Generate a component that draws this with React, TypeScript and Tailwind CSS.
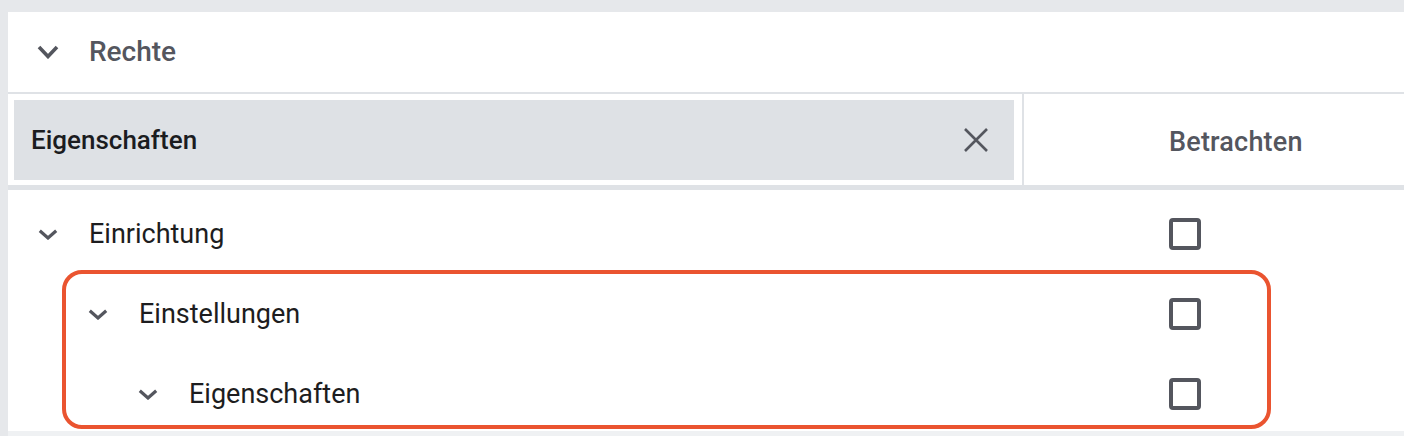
import React from "react";

const rows = [
  { label: "Einrichtung", level: 0 },
  { label: "Einstellungen", level: 1 },
  { label: "Eigenschaften", level: 2 },
];

function Chevron({ big }: { big?: boolean }) {
  if (big) {
    return (
      <svg width="22" height="14" viewBox="0 0 22 14" className="shrink-0">
        <polyline points="2,2 11,11.5 20,2" fill="none" stroke="#54565e" strokeWidth="3.6" />
      </svg>
    );
  }
  return (
    <svg width="20" height="11" viewBox="0 0 20 11" className="shrink-0">
      <polyline points="1.8,1.8 10,9 18.2,1.8" fill="none" stroke="#54565e" strokeWidth="3.2" />
    </svg>
  );
}

function CloseIcon() {
  return (
    <svg width="24" height="24" viewBox="0 0 24 24">
      <path d="M1 1 L23 23 M23 1 L1 23" stroke="#54565e" strokeWidth="2.6" fill="none" />
    </svg>
  );
}

export default function App() {
  return (
    <div
      className="relative h-[436px] w-[1404px] overflow-hidden bg-[#e6e8eb] pl-[8px] pt-[12px]"
      style={{ fontFamily: "Roboto, 'Noto Sans', sans-serif" }}
    >
      <div className="flex h-[419px] w-[1420px] flex-col overflow-hidden bg-white">
        {/* section header */}
        <div className="flex h-[80px] shrink-0 items-center pl-[29px]">
          <Chevron big />
          <span className="ml-[30px] text-[28px] font-medium leading-none text-[#54565e]">Rechte</span>
        </div>
        <div className="h-[2px] shrink-0 bg-[#dfe2e6]" />

        {/* filter row */}
        <div className="flex h-[91px] shrink-0">
          <div className="w-[1014px] pb-[5px] pl-[6px] pr-[8px] pt-[6px]">
            <div className="flex h-full items-center justify-between bg-[#dee1e5] pl-[17px] pr-[26px]">
              <span className="text-[26px] font-medium text-[#1b1c1f]">Eigenschaften</span>
              <CloseIcon />
            </div>
          </div>
          <div className="w-[2px] bg-[#dfe2e6]" />
          <div className="flex flex-1 items-center pl-[145px] pt-[6px]">
            <span className="text-[27px] font-medium tracking-[0.2px] text-[#54565e]">Betrachten</span>
          </div>
        </div>
        <div className="h-[5px] shrink-0 bg-[#dfe2e6]" />

        {/* tree rows */}
        <div className="pt-[4px]">
          {rows.map((r) => (
            <div key={r.label} className="flex h-[80px] items-center">
              <div className="flex w-[1016px] items-center" style={{ paddingLeft: 30 + r.level * 50 }}>
                <Chevron />
                <span className="ml-[31px] text-[27px] text-[#1d1d20]">{r.label}</span>
              </div>
              <div className="pl-[145px]">
                <div className="h-[32px] w-[32px] rounded-[4px] border-[4px] border-[#54565e]" />
              </div>
            </div>
          ))}
        </div>
      </div>
      <div className="h-[5px] bg-[#eff1f3]" />

      {/* annotation */}
      <div className="pointer-events-none absolute left-[62px] top-[270px] h-[159px] w-[1209px] rounded-[20px] border-[4px] border-[#ea5430]" />
    </div>
  );
}
